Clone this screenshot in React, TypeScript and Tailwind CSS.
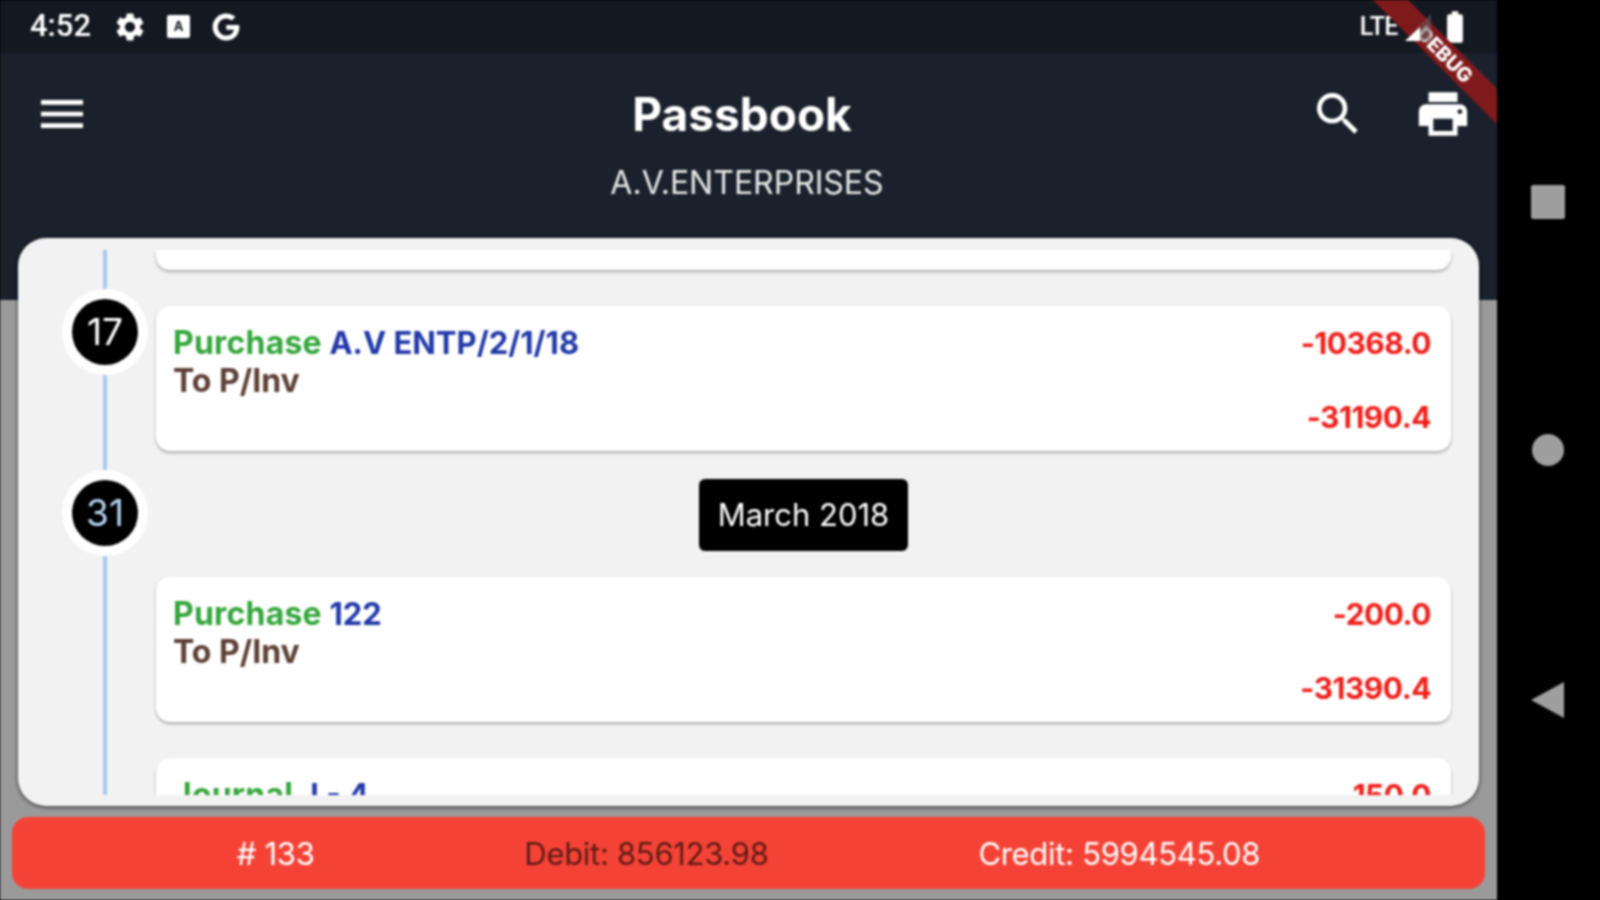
import { MdBatteryFull, MdMenu, MdPrint, MdSearch, MdSettings } from 'react-icons/md';
import { FaGoogle } from 'react-icons/fa';

interface Entry { type: string; ref: string; note: string; amount: string; balance: string; }

const entries: Entry[] = [
  { type: 'Purchase', ref: 'A.V ENTP/2/1/18', note: 'To P/Inv', amount: '-10368.0', balance: '-31190.4' },
  { type: 'Purchase', ref: '122', note: 'To P/Inv', amount: '-200.0', balance: '-31390.4' },
];

function EntryCard({ entry }: { entry: Entry }) {
  return (
    <div className="h-[145px] shrink-0 flex justify-between rounded-[14px] bg-white pl-[17px] pr-[20px] pt-[18px] text-[32px] leading-[38px] font-bold shadow-[0_2px_3px_rgba(0,0,0,0.3)]">
      <div>
        <div>
          <span className="text-[#35a63d] tracking-[0.2px]">{entry.type}</span>{' '}
          <span className="text-[31px] text-[#2239a8]">{entry.ref}</span>
        </div>
        <div className="text-[#5d3f35]">{entry.note}</div>
      </div>
      <div className="flex flex-col items-end text-[30px] tracking-[-0.5px] text-[#f01f1a]">
        <div>{entry.amount}</div>
        <div className="mt-[36px]">{entry.balance}</div>
      </div>
    </div>
  );
}

function DayBadge({ day, tone }: { day: string; tone: string }) {
  return (
    <div className="w-[86px] h-[86px] shrink-0 rounded-full bg-white flex items-center justify-center">
      <div className={`w-[66px] h-[66px] rounded-full bg-black flex items-center justify-center text-[37px] font-normal ${tone}`}>
        {day}
      </div>
    </div>
  );
}

export default function App() {
  return (
    <div className="w-[1600px] h-[900px] overflow-hidden bg-black">
      {/* padding gives the blur something dark to sample past the window edge */}
      <div className="w-[1608px] h-[908px] -m-[4px] p-[4px] bg-black blur-[0.8px] font-['Inter','Liberation_Sans',sans-serif]">
        <div className="w-[1600px] h-[900px] flex">
          <div className="relative w-[1497px] h-full flex flex-col overflow-hidden bg-[#9a9a9a]">
            <div className="h-[53px] shrink-0 flex items-center justify-between bg-[#141821] pl-[30px] pr-[23px] text-white">
              <div className="flex items-center">
                <span className="text-[31px] font-medium font-['Roboto',sans-serif]">4:52</span>
                <MdSettings className="ml-[22px]" size={34} />
                <div className="ml-[20px] w-[23px] h-[23px] rounded-[2px] bg-white flex items-center justify-center text-[13px] font-bold text-[#141821]">A</div>
                <FaGoogle className="ml-[22px]" size={28} />
              </div>
              <div className="flex items-center">
                <span className="text-[25px] font-medium tracking-[-0.5px] font-['Roboto',sans-serif]">LTE</span>
                <svg className="relative z-10 ml-[7px]" width="27" height="28" viewBox="0 0 27 28">
                  <path d="M0 28 L26 1 V28 Z" fill="#6b5a5c" fillOpacity="0.6" />
                  <path d="M0 28 L15 14 V28 Z" fill="#ffffff" />
                </svg>
                <MdBatteryFull className="ml-[4px]" size={38} />
              </div>
            </div>

            <div className="h-[247px] shrink-0 bg-[#1b212c] text-white">
              <div className="flex items-center pl-[34px] pr-[25px] pt-[32px]">
                <MdMenu size={56} />
                <div className="flex-1 pl-[84px] text-center text-[46px] leading-[56px] font-bold">Passbook</div>
                <MdSearch size={56} />
                <MdPrint className="ml-[48px]" size={58} />
              </div>
              <div className="mt-[20px] pr-[3px] text-center text-[32px] leading-[40px] text-[#e8e8e8]">A.V.ENTERPRISES</div>
            </div>

            <div className="relative h-[568px] shrink-0 mx-[18px] -mt-[62px] rounded-[28px] bg-[#f2f2f2] pt-[12px] pb-[11px] shadow-[0_1px_4px_rgba(0,0,0,0.7)]">
              <div className="h-full flex overflow-hidden pr-[28px]">
                <div className="ml-[44px] mr-[8px] w-[86px] shrink-0 flex flex-col items-center">
                  <div className="h-[39px] w-[4px] bg-[#a9c9f0]" />
                  <DayBadge day="17" tone="text-white" />
                  <div className="h-[95px] w-[4px] bg-[#a9c9f0]" />
                  <DayBadge day="31" tone="text-[#b5d3f2]" />
                  <div className="flex-1 w-[4px] bg-[#a9c9f0]" />
                </div>
                <div className="flex-1 flex flex-col">
                  <div className="h-[20px] shrink-0 rounded-b-[14px] bg-white shadow-[0_2px_3px_rgba(0,0,0,0.3)]" />
                  <div className="h-[36px] shrink-0" />
                  <EntryCard entry={entries[0]} />
                  <div className="mt-[28px] self-center w-[209px] h-[72px] shrink-0 rounded-[6px] bg-black flex items-center justify-center text-[31px] text-white">
                    March 2018
                  </div>
                  <div className="h-[26px] shrink-0" />
                  <EntryCard entry={entries[1]} />
                  <div className="h-[36px] shrink-0" />
                  <EntryCard entry={{ type: 'Journal', ref: 'J - 4', note: '', amount: '-150.0', balance: '' }} />
                </div>
              </div>
            </div>

            <div className="h-[72px] shrink-0 mt-[11px] mx-[12px] px-[15px] pt-[3px] rounded-[16px] bg-[#f44336] flex items-center justify-evenly text-[31px] tracking-[-0.3px]">
              <span className="text-white">{'# 133'}</span>
              <span className="text-[#5c1a15]">Debit: 856123.98</span>
              <span className="text-white">Credit: 5994545.08</span>
            </div>

            <div className="absolute left-[1343px] top-[40px] w-[200px] h-[25px] pl-[6px] rotate-45 bg-[#7f1a1c] flex items-center justify-center text-[20px] leading-none font-extrabold text-white">
              DEBUG
            </div>
          </div>

          <div className="flex-1 flex flex-col items-center pl-[1px] pr-[2px] pt-[185px] gap-[215px]">
            <div className="w-[34px] h-[34px] rounded-[2px] bg-[#9e9e9e]" />
            <div className="w-[32px] h-[32px] rounded-full bg-[#9e9e9e]" />
            <svg width="36" height="38" viewBox="0 0 36 38">
              <path d="M34 1 V37 L1 19 Z" fill="#9e9e9e" />
            </svg>
          </div>
        </div>
      </div>
    </div>
  );
}
